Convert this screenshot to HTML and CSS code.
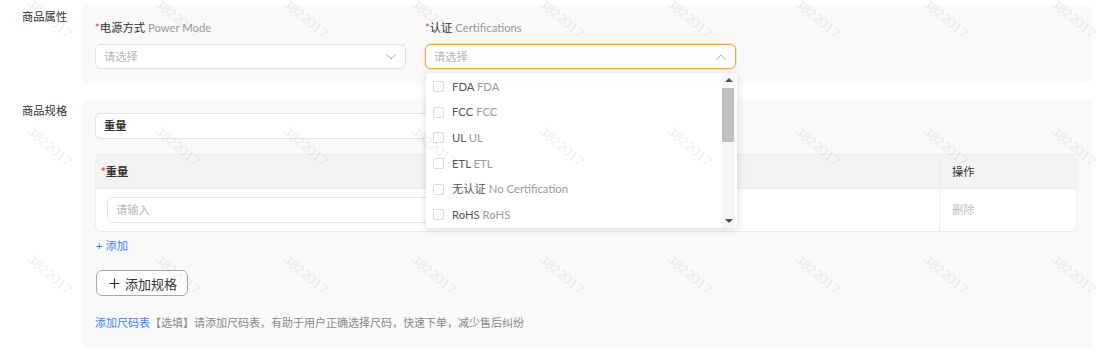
FILE: index.html
```html
<!DOCTYPE html>
<html lang="zh-CN">
<head>
  <meta charset="UTF-8">
  <meta name="viewport" content="width=device-width, initial-scale=1.0">
  <title>商品属性</title>
  <link rel="stylesheet" href="styles.css">
</head>
<body>
  <div class="page">
    <!-- 商品属性 -->
    <div class="form-row">
      <div class="row-label">商品属性</div>
      <div class="panel attr-panel">
        <div class="field">
          <div class="field-label"><span class="req">*</span>电源方式 <span class="en">Power Mode</span></div>
          <div class="select">
            <span class="placeholder">请选择</span>
            <svg class="chevron" width="10" height="6" viewBox="0 0 10 6"><polyline points="0.5,0.5 5,5 9.5,0.5" fill="none" stroke="#b0b0b0" stroke-width="1"/></svg>
          </div>
        </div>
        <div class="field">
          <div class="field-label"><span class="req">*</span>认证 <span class="en">Certifications</span></div>
          <div class="select is-open">
            <span class="placeholder">请选择</span>
            <svg class="chevron" width="10" height="6" viewBox="0 0 10 6"><polyline points="0.5,5.5 5,1 9.5,5.5" fill="none" stroke="#b0b0b0" stroke-width="1"/></svg>
          </div>
          <div class="dropdown">
            <ul class="options">
              <li><span class="checkbox"></span>FDA <span class="en">FDA</span></li>
              <li><span class="checkbox"></span>FCC <span class="en">FCC</span></li>
              <li><span class="checkbox"></span>UL <span class="en">UL</span></li>
              <li><span class="checkbox"></span>ETL <span class="en">ETL</span></li>
              <li><span class="checkbox"></span>无认证 <span class="en">No Certification</span></li>
              <li><span class="checkbox"></span>RoHS <span class="en">RoHS</span></li>
            </ul>
            <div class="scrollbar">
              <span class="arrow up"></span>
              <div class="track"><div class="thumb"></div></div>
              <span class="arrow down"></span>
            </div>
          </div>
        </div>
      </div>
    </div>

    <!-- 商品规格 -->
    <div class="form-row">
      <div class="row-label">商品规格</div>
      <div class="panel spec-panel">
        <div class="input spec-name">重量</div>
        <div class="spec-table">
          <div class="tr thead">
            <div class="td col-main"><span class="req">*</span>重量</div>
            <div class="td col-op">操作</div>
          </div>
          <div class="tr">
            <div class="td col-main"><div class="input value-input"><span class="placeholder">请输入</span></div></div>
            <div class="td col-op"><span class="muted">删除</span></div>
          </div>
        </div>
        <a class="link add-value">+ 添加</a>
        <button class="btn-add">
          <svg width="11" height="11" viewBox="0 0 11 11"><path d="M5.5 0.5v10M0.5 5.5h10" stroke="#333" stroke-width="1.2"/></svg>
          添加规格
        </button>
        <p class="hint"><a class="link">添加尺码表</a>【选填】请添加尺码表，有助于用户正确选择尺码，快速下单，减少售后纠纷</p>
      </div>
    </div>
  </div>

  <div class="watermark" id="watermark"></div>

  <script>
    const wm = document.getElementById('watermark');
    for (let i = 0; i < 40; i++) {
      const span = document.createElement('span');
      span.textContent = '3822017';
      wm.appendChild(span);
    }
  </script>
</body>
</html>
```

FILE: styles.css
```css
/* Global */
body {
  margin: 0;
  background: #ffffff;
  color: #333333;
  font-family: 'Lato', 'Noto Sans CJK SC', sans-serif;
  font-size: 11.3px;
  line-height: 16px;
}

.page {
  padding: 5px 9px 0 0;
}

.form-row {
  display: flex;
  margin-bottom: 16px;
}

.row-label {
  width: 81px;
  flex-shrink: 0;
  box-sizing: border-box;
  padding: 4px 0 0 22px;
  color: #333333;
}

.panel {
  flex: 1;
  background: #f9f9f9;
  border-radius: 6px;
}

.req {
  color: #f04134;
}

.en {
  color: #9a9a9a;
}

.placeholder {
  color: #b8b8b8;
}

/* Attribute panel */
.attr-panel {
  display: flex;
  gap: 19px;
  padding: 15px 14px 14px;
}

.field {
  position: relative;
  width: 311px;
}

.field-label {
  margin-bottom: 8px;
}

.select {
  height: 25px;
  box-sizing: border-box;
  display: flex;
  align-items: center;
  justify-content: space-between;
  padding: 0 9px 0 8px;
  background: #ffffff;
  border: 1px solid #e3e3e3;
  border-radius: 6px;
}

.select.is-open {
  border-color: #f6a24f;
  box-shadow: 0 0 0 1px rgba(246, 162, 79, 0.25);
}

/* Dropdown */
.dropdown {
  position: absolute;
  top: 53px;
  left: 1px;
  width: 311px;
  height: 155px;
  display: flex;
  background: #ffffff;
  border-radius: 4px;
  box-shadow: 0 2px 8px rgba(0, 0, 0, 0.15);
  z-index: 5;
}

.options {
  flex: 1;
  margin: 0;
  padding: 1px 0 0;
  list-style: none;
}

.options li {
  height: 25.6px;
  display: flex;
  align-items: center;
  padding-left: 7px;
  color: #555555;
  white-space: pre;
}

.checkbox {
  width: 11px;
  height: 11px;
  border: 1px solid #dcdcdc;
  border-radius: 2px;
  margin-right: 8px;
  box-sizing: border-box;
  background: #ffffff;
}

.scrollbar {
  width: 13px;
  margin: 0 2px 0 0;
  display: flex;
  flex-direction: column;
  align-items: center;
  background: #f6f6f6;
}

.arrow {
  height: 14px;
  width: 13px;
  display: flex;
  align-items: center;
  justify-content: center;
}

.arrow::before {
  content: '';
  border-left: 4px solid transparent;
  border-right: 4px solid transparent;
}

.arrow.up::before {
  border-bottom: 4px solid #505050;
}

.arrow.down::before {
  border-top: 4px solid #505050;
}

.track {
  flex: 1;
  width: 100%;
}

.thumb {
  height: 54px;
  margin: 1px 1px 0 0;
  background: #c1c1c1;
}

/* Spec panel */
.spec-panel {
  padding: 14px 15px 18px 14px;
}

.input {
  height: 26px;
  box-sizing: border-box;
  display: flex;
  align-items: center;
  padding: 0 8px;
  background: #ffffff;
  border: 1px solid #e3e3e3;
  border-radius: 6px;
}

.spec-name {
  width: 460px;
  padding-left: 8px;
  font-weight: bold;
  color: #333333;
}

.spec-table {
  margin-top: 15px;
  border: 1px solid #ececec;
  border-radius: 6px;
  overflow: hidden;
  background: #ffffff;
}

.tr {
  display: flex;
  height: 42px;
}

.tr.thead {
  height: 33px;
  background: #f3f3f3;
  border-bottom: 1px solid #ececec;
  font-weight: bold;
}

.td {
  display: flex;
  align-items: center;
}

.col-main {
  flex: 1;
  padding-left: 5px;
}

.tr:not(.thead) .col-main {
  padding-left: 11px;
}

.col-op {
  width: 124px;
  padding-left: 12px;
  border-left: 1px solid #ececec;
  font-weight: normal;
}

.value-input {
  width: 400px;
}

.muted {
  color: #c0c0c0;
}

.link {
  color: #3d7ff2;
  cursor: pointer;
}

.add-value {
  display: block;
  margin: 6px 0 0 1px;
}

.btn-add {
  display: flex;
  align-items: center;
  gap: 5px;
  margin: 16px 0 0 1px;
  height: 26px;
  padding: 0 10px 0 12px;
  background: #ffffff;
  border: 1px solid #a8a8a8;
  border-radius: 6px;
  font-family: inherit;
  font-size: 13px;
  color: #333333;
}

.hint {
  margin: 19px 0 0;
  font-size: 11px;
  color: #8a8a8a;
}

/* Watermark */
.watermark {
  position: fixed;
  top: -46px;
  left: -14px;
  width: 1280px;
  height: 512px;
  display: grid;
  grid-template-columns: repeat(10, 128px);
  grid-auto-rows: 128px;
  pointer-events: none;
  overflow: hidden;
  z-index: 10;
}

.watermark span {
  display: flex;
  align-items: center;
  justify-content: center;
  transform: rotate(40deg);
  font-size: 13px;
  color: rgba(0, 0, 0, 0.07);
}
```
